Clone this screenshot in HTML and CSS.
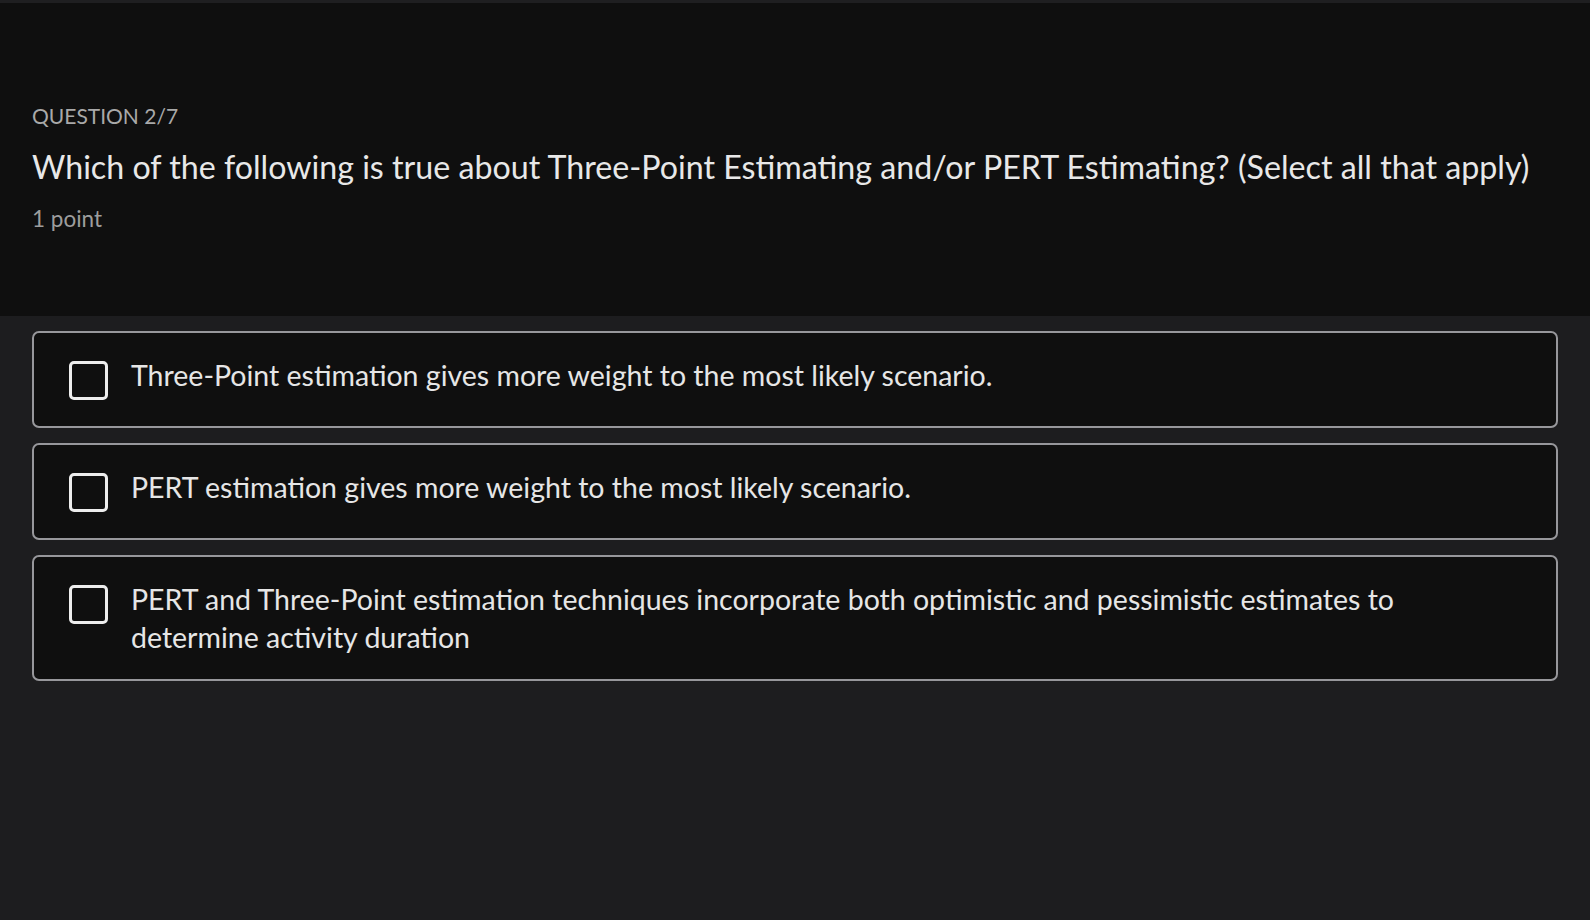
FILE: index.html
```html
<!DOCTYPE html>
<html lang="en">
<head>
<meta charset="utf-8">
<title>Question 2/7</title>
<link rel="stylesheet" href="styles.css">
</head>
<body>
<div class="topline"></div>
<header class="qhead">
  <div class="qnum">QUESTION 2/7</div>
  <h1 class="qtitle">Which of the following is true about Three-Point Estimating and/or PERT Estimating? (Select all that apply)</h1>
  <div class="qpoints">1 point</div>
</header>
<main class="options">
  <label class="opt">
    <span class="box"></span>
    <span class="opt-text">Three-Point estimation gives more weight to the most likely scenario.</span>
  </label>
  <label class="opt">
    <span class="box"></span>
    <span class="opt-text">PERT estimation gives more weight to the most likely scenario.</span>
  </label>
  <label class="opt">
    <span class="box"></span>
    <span class="opt-text">PERT and Three-Point estimation techniques incorporate both optimistic and pessimistic estimates to determine activity duration</span>
  </label>
</main>
</body>
</html>
```

FILE: styles.css
```css
* { box-sizing: border-box; }
html, body { margin: 0; padding: 0; }
body {
  background: #1d1d1f;
  font-family: "Lato", "Liberation Sans", sans-serif;
  color: #e6e6e6;
  height: 920px;
  overflow: hidden;
}
.topline { height: 3px; background: #1f1f21; }
.qhead {
  background: #0f0f0f;
  height: 313px;
  padding: 99px 32px 0 32px;
}
.qnum {
  font-size: 21px;
  line-height: 28px;
  color: #a9a9a9;
}
.qtitle {
  margin: 17px 0 0 0;
  font-weight: 400;
  font-size: 32.2px;
  line-height: 40px;
  color: #e8e8e8;
}
.qpoints {
  margin-top: 18px;
  font-size: 22.5px;
  line-height: 28px;
  color: #9d9d9d;
}
.options {
  padding: 15px 32px;
  display: flex;
  flex-direction: column;
  gap: 15px;
}
.opt {
  display: flex;
  align-items: flex-start;
  gap: 23px;
  background: #0f0f0f;
  border: 2px solid #97979b;
  border-radius: 7px;
  padding: 23px 64px 23px 35px;
}
.box {
  flex: none;
  width: 39px;
  height: 39px;
  margin: 5px 0 3px 0;
  border: 3px solid #ededed;
  border-radius: 5px;
}
.opt-text {
  font-size: 28.5px;
  line-height: 38px;
  color: #e6e6e6;
}
```
